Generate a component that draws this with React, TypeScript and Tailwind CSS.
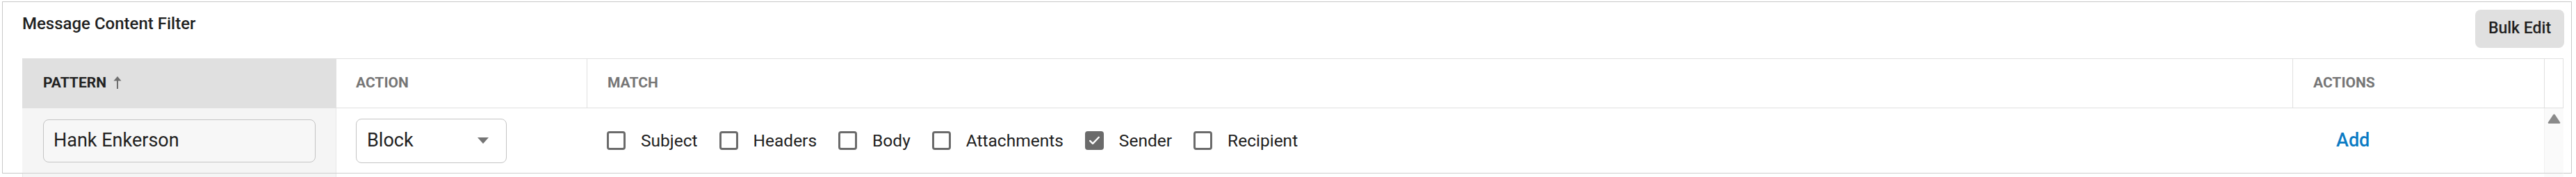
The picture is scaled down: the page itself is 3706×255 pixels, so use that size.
import React from "react";

function Checkbox({ checked }: { checked?: boolean }) {
  return (
    <span
      className={
        "flex items-center justify-center w-[27px] h-[27px] rounded-[4px] border-[3px] border-[#6b6b6b] " +
        (checked ? "bg-[#6b6b6b]" : "bg-white")
      }
    >
      {checked && (
        <svg width="19" height="19" viewBox="0 0 24 24" fill="none">
          <path d="M4 12.5l5 5L20 6" stroke="white" strokeWidth="3" strokeLinecap="round" strokeLinejoin="round" />
        </svg>
      )}
    </span>
  );
}

function CheckItem({ label, checked }: { label: string; checked?: boolean }) {
  return (
    <label className="flex items-center gap-[22px]">
      <Checkbox checked={checked} />
      <span className="text-[24.5px] leading-[30px] text-[#212121]">{label}</span>
    </label>
  );
}

export default function App() {
  const items: { label: string; checked?: boolean }[] = [
    { label: "Subject" },
    { label: "Headers" },
    { label: "Body" },
    { label: "Attachments" },
    { label: "Sender", checked: true },
    { label: "Recipient" },
  ];
  return (
    <div className="w-[3706px] h-[255px] overflow-hidden bg-white font-['Roboto',sans-serif] text-[#212121]">
      <div className="ml-[3px] mt-[2px] w-[3697px] h-[248px] border border-[#c8c8c8]">
        <div className="flex items-start justify-between pl-[28px] pr-[10px] pt-[11px]">
          <h1 className="mt-[6px] text-[24px] leading-[28px] font-medium text-[#1f1f1f]">
            Message Content Filter
          </h1>
          <button className="w-[128px] h-[55px] rounded-[8px] bg-[#e0e0e0] text-[23px] font-medium text-[#1f1f1f]">
            Bulk Edit
          </button>
        </div>

        <div className="ml-[28px] mt-[15px] w-[3656px] border-t border-r border-[#e0e0e0]">
          {/* header */}
          <div className="grid grid-cols-[451px_361px_2454px_362px_28px] h-[71px] border-b border-[#e0e0e0]">
            <div className="flex items-center gap-[10px] pl-[30px] bg-[#e0e0e0]">
              <span className="text-[21px] font-bold text-[#222]">PATTERN</span>
              <svg width="12" height="20" viewBox="0 0 12 20" className="mt-[-2px]">
                <path d="M6 1L11.5 7.5H0.5Z" fill="#6e6e6e" />
                <rect x="5" y="6" width="2" height="13" fill="#6e6e6e" />
              </svg>
            </div>
            <div className="flex items-center pl-[28px] border-l border-[#e0e0e0]">
              <span className="text-[21px] font-bold text-[#767676]">ACTION</span>
            </div>
            <div className="flex items-center pl-[29px] border-l border-[#e0e0e0]">
              <span className="text-[21px] font-bold text-[#767676]">MATCH</span>
            </div>
            <div className="flex items-center pl-[29px] border-l border-[#e0e0e0]">
              <span className="text-[21px] font-bold text-[#767676]">ACTIONS</span>
            </div>
            <div className="border-l border-[#e0e0e0]" />
          </div>

          {/* row */}
          <div className="grid grid-cols-[451px_361px_2454px_362px_28px] h-[94px] border-b border-[#cfcfcf]">
            <div className="flex items-center pl-[30px] bg-[#f5f5f5]">
              <div className="flex items-center w-[392px] h-[62px] rounded-[8px] border border-[#c4c4c4] bg-[#f7f7f7] pl-[14px]">
                <span className="text-[27px] text-[#212121]">Hank Enkerson</span>
              </div>
            </div>
            <div className="flex items-center pl-[28px] border-l border-[#e8e8e8]">
              <div className="flex items-center justify-between w-[217px] h-[64px] rounded-[8px] border border-[#c4c4c4] bg-white pl-[15px] pr-[25px]">
                <span className="text-[27px] text-[#212121]">Block</span>
                <svg width="16" height="9" viewBox="0 0 16 9">
                  <path d="M0 0H16L8 9Z" fill="#757575" />
                </svg>
              </div>
            </div>
            <div className="flex items-center gap-[31px] pl-[29px]">
              {items.map((it) => (
                <CheckItem key={it.label} label={it.label} checked={it.checked} />
              ))}
            </div>
            <div className="flex items-center pl-[63px]">
              <span className="text-[27px] font-medium text-[#0b7bc4]">Add</span>
            </div>
            <div className="flex justify-center pt-[8px] bg-[#fafafa] border-l border-[#f0f0f0]">
              <svg width="19" height="15" viewBox="0 0 19 15">
                <path d="M8 1.5Q9.5 -0.5 11 1.5L18 12Q19 14 17 14H2Q0 14 1 12Z" fill="#8a8a8a" />
              </svg>
            </div>
          </div>

          {/* next row (cut off) */}
          <div className="grid grid-cols-[451px_361px_2454px_362px_28px] h-[60px]">
            <div className="bg-[#f5f5f5] border-l border-[#e6e6e6]" />
            <div className="border-l border-[#e8e8e8]" />
            <div />
            <div />
            <div className="bg-[#fafafa]" />
          </div>
        </div>
      </div>
    </div>
  );
}
